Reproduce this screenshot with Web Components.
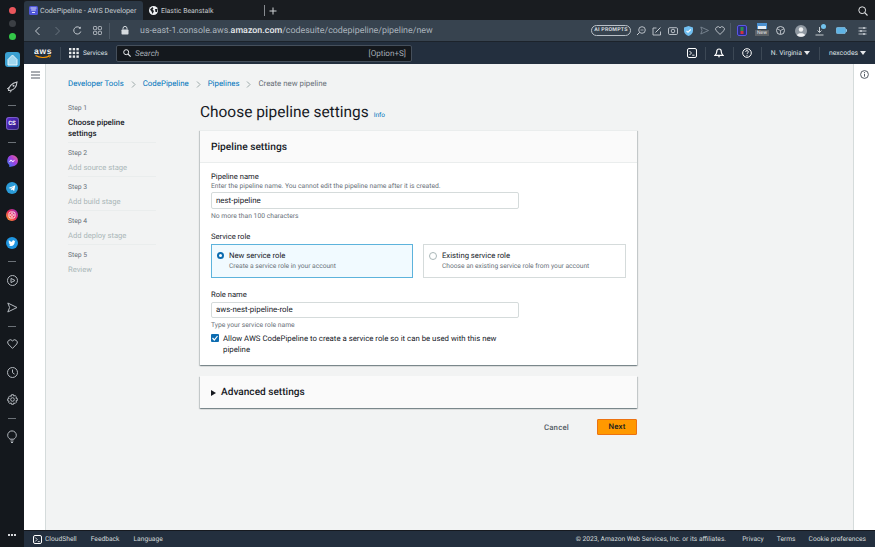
<!DOCTYPE html>
<html><head><meta charset="utf-8"><style>
html,body{margin:0;padding:0;height:100%;overflow:hidden}
body{width:875px;height:547px;font-family:Roboto,"Noto Sans",sans-serif;display:flex;background:#14181d;text-rendering:geometricPrecision}
</style></head><body>
<app-rail></app-rail>
<app-window></app-window>
<script>
function def(name,css,html){
 customElements.define(name,class extends HTMLElement{
  constructor(){super();this.attachShadow({mode:'open'}).innerHTML='<style>'+css+'</style>'+html;}
 });
}
const ic=(w,h,vb,inner,st='')=>`<svg width="${w}" height="${h}" viewBox="${vb}" style="display:block;flex:none;${st}">${inner}</svg>`;
const railStroke='fill="none" stroke="#b4b9bf" stroke-width="1"';
def('app-rail',`
:host{display:flex;flex-direction:column;align-items:center;width:24px;flex:none;background:#14181d;position:relative;box-sizing:border-box;padding-top:7px}
.d{width:7px;height:7px;border-radius:50%;margin-bottom:6px}
.sep{width:8px;height:1px;background:#6b7177;flex:none}
svg{display:block}
.home{width:15px;height:15px;border-radius:3px;background:#3aa0d2;display:flex;align-items:center;justify-content:center;margin-top:12px;flex:none}
.more{position:absolute;bottom:11px;left:8px;width:8px;height:2px;background:radial-gradient(circle at 1px 1px,#d5d7da 1px,transparent 1.1px) 0 0/3px 2px}
`,`
<div class="d" style="background:#e9565c"></div><div class="d" style="background:#3b3f44"></div><div class="d" style="background:#33c748;margin-bottom:0"></div>
<div class="home">${ic(11,12,'0 0 11 12','<path d="M1 11V5.500L5.500 1 10 5.500V11Z" fill="#9fd6ef" stroke="#e5f5fc" stroke-width="1"/>')}</div>
${ic(12,12,'0 0 12 12','<path d="M2.500 9.500c0-3.500 3-7.500 8.500-8.500-.5 5.500-4 8-7 8.500Z" fill="none" stroke="#c9ccd0" stroke-width="1.100"/><path d="M1 8l2-1.500M4 11.500l1.500-2" stroke="#c9ccd0"/><circle cx="7.500" cy="4.800" r="1" fill="#c9ccd0"/>','margin-top:14px')}
<div class="sep" style="margin-top:12px"></div>
<div style="margin-top:11px;width:13px;height:13px;flex:none;border-radius:3px;background:linear-gradient(135deg,#5b2bd0,#2c1a7a);box-shadow:inset 0 0 0 1px rgba(255,255,255,.25);color:#fff;font:700 6px/13px Roboto;text-align:center">CS</div>
<div class="sep" style="margin-top:12px"></div>
${ic(12,12,'0 0 12 12','<defs><linearGradient id="m" x1="0" y1="1" x2="1" y2="0"><stop offset="0" stop-color="#2f7df6"/><stop offset=".55" stop-color="#a33ee0"/><stop offset="1" stop-color="#f26a7e"/></linearGradient></defs><path d="M6 0a6 5.700 0 0 1 0 11.400L3.300 12v-2A5.700 5.700 0 0 1 6 0Z" fill="url(#m)"/><path d="M2.500 7.300 5 4.600l1.600 1.500 2.800-1.500L7 7.300 5.300 5.900Z" fill="#fff"/>','margin-top:12px')}
${ic(12,12,'0 0 12 12','<circle cx="6" cy="6" r="6" fill="#2a9bd8"/><path d="M2.500 6 9.300 3.200 8.200 9 6 7.400 5 8.400 4.800 6.900 8 4.400 4.300 6.600Z" fill="#fff"/>','margin-top:15px')}
${ic(12,12,'0 0 12 12','<defs><linearGradient id="g" x1="0" y1="1" x2="1" y2="0"><stop offset="0" stop-color="#fdb32b"/><stop offset=".5" stop-color="#ee2a5c"/><stop offset="1" stop-color="#8b2fc9"/></linearGradient></defs><circle cx="6" cy="6" r="6" fill="url(#g)"/><rect x="3" y="3" width="6" height="6" rx="1.500" fill="none" stroke="#fff" stroke-width=".9"/><circle cx="6" cy="6" r="1.400" fill="none" stroke="#fff" stroke-width=".8"/>','margin-top:15px')}
${ic(12,12,'0 0 12 12','<circle cx="6" cy="6" r="6" fill="#1f95e0"/><path d="M2.600 8.500c3.600 1.600 6.300-.5 6.200-4l.7-.7-.9.2c-.6-1.300-2.600-.9-2.500.8-1.300 0-2.400-.6-3.200-1.500-.4.900-.2 1.700.4 2.300l-.6-.1c0 .8.500 1.300 1.200 1.600h-.6c.2.500.7.800 1.200.9-.5.400-1.200.6-1.900.5Z" fill="#fff"/>','margin-top:16px')}
<div class="sep" style="margin-top:12px"></div>
${ic(11,11,'0 0 11 11','<circle cx="5.500" cy="5.500" r="5" '+railStroke+'/><path d="M4 3.400 8 5.500 4 7.600Z" '+railStroke+'/>','margin-top:13px')}
${ic(11,11,'0 0 11 11','<path d="M.8 1 10 5.500.8 10 2.600 5.500Z" '+railStroke+'/>','margin-top:16px')}
<div class="sep" style="margin-top:13px"></div>
${ic(11,10,'0 0 11 10','<path d="M5.500 9.400 1.200 5A2.600 2.600 0 0 1 5.500 1.900 2.600 2.600 0 0 1 9.800 5Z" '+railStroke+'/>','margin-top:12px')}
${ic(11,11,'0 0 11 11','<circle cx="5.500" cy="5.500" r="5" '+railStroke+'/><path d="M5.500 2.500v3.200l2 1.400" '+railStroke+'/>','margin-top:18px')}
${ic(11,11,'0 0 11 11','<circle cx="5.500" cy="5.500" r="1.800" '+railStroke+'/><path d="M4.500.7h2l.3 1.400 1.300-.6 1.400 1.400-.6 1.300 1.400.3v2l-1.400.3.6 1.300-1.400 1.400-1.300-.6-.3 1.400h-2l-.3-1.400-1.300.6L1.500 8.400l.6-1.300L.7 6.800v-2l1.400-.3-.6-1.300L2.900 1.800l1.300.6Z" '+railStroke+'/>','margin-top:16px')}
<div class="sep" style="margin-top:13px"></div>
${ic(10,13,'0 0 10 13','<path d="M3 9.200C1.600 8 .7 7 .7 5.200a4.300 4.300 0 0 1 8.600 0C9.300 7 8.400 8 7 9.200Z" '+railStroke+'/><path d="M3.500 11h3M4 12.500h2" '+railStroke+'/>','margin-top:11px')}
<div class="more"></div>
`);

def('browser-chrome',`
:host{display:block;flex:none;background:#191c20}
.tabs{height:19px;padding-top:1px;display:flex;align-items:stretch;background:#191c20;position:relative}
.tab{display:flex;align-items:center;font-size:7.200px;color:#d6dade;white-space:nowrap}
.tab.a{width:119px;background:#2b3744;border-radius:3px 3px 0 0;padding-left:5px;box-sizing:border-box;gap:2px}
.tab.a span{color:#c9ced3}
.tab.b{width:121px;padding-left:6px;box-sizing:border-box;gap:3px;color:#c8ccd0;font-size:6.900px}
.plus{display:flex;align-items:center;gap:4px;color:#d0d3d6}
.sr{position:absolute;right:7px;top:6px}
.addr{height:21px;background:#37434f;display:flex;align-items:center;position:relative;border-bottom:1px solid #1c232b}
.url{font-size:8.900px;color:#aab3bc;white-space:nowrap}
.url b{font-weight:500;color:#e6e9ec}
.vs{width:1px;height:16px;background:#4e5a66;flex:none}
.pill{border:1px solid #b9c0c7;border-radius:6px;height:11px;width:40px;box-sizing:border-box;line-height:9px;font-size:5.300px;font-weight:700;color:#d2d7dc;text-align:center;letter-spacing:.2px;white-space:nowrap}
`,`
<div class="tabs">
 <div class="tab a">${ic(9,9,'0 0 9 9','<rect width="9" height="9" rx="1.500" fill="#4f56d8"/><path d="M1.500 2h6M2.200 4h4.600M3 6.500h3" stroke="#dfe2fb" stroke-width="1.100"/>')}<span>CodePipeline - AWS Developer</span></div>
 <div class="tab b">${ic(9,9,'0 0 9 9','<circle cx="4.500" cy="4.500" r="4.500" fill="#f0f2f4"/><path d="M1 3.500 3.500 1l1 1.500-1 1 1.500 1.500L3.500 8 2.500 5.500ZM6 3h2.500L8 6 6.500 6Z" fill="#1b1e22"/>')}<span>Elastic Beanstalk</span></div>
 <div class="plus"><div style="width:1px;height:11px;background:#878b90;align-self:center"></div>${ic(8,8,'0 0 8 8','<path d="M4 .5v7M.5 4h7" stroke="#d0d3d6" stroke-width="1"/>')}</div>
 <div class="sr">${ic(10,10,'0 0 10 10','<circle cx="4.200" cy="4.200" r="3.400" fill="none" stroke="#e3e5e7" stroke-width="1"/><path d="M6.700 6.700 9.500 9.500" stroke="#e3e5e7" stroke-width="1.100"/>')}</div>
</div>
<div class="addr">
 ${ic(7,10,'0 0 7 10','<path d="M5.500 1 1.500 5l4 4" fill="none" stroke="#c6ccd2" stroke-width="1"/>','margin-left:10px')}
 ${ic(7,10,'0 0 7 10','<path d="M1.500 1l4 4-4 4" fill="none" stroke="#69747f" stroke-width="1"/>','margin-left:13px')}
 ${ic(9,9,'0 0 9 9','<path d="M7.800 5.500A3.600 3.600 0 1 1 7 2" fill="none" stroke="#c6ccd2" stroke-width="1"/><path d="M7.800.6v2.200H5.600Z" fill="#c6ccd2"/>','margin-left:12px')}
 ${ic(9,9,'0 0 9 9','<g fill="none" stroke="#c6ccd2" stroke-width=".8"><rect x=".5" y=".5" width="3.200" height="3.200" rx=".7"/><rect x="5.300" y=".5" width="3.200" height="3.200" rx=".7"/><rect x=".5" y="5.300" width="3.200" height="3.200" rx=".7"/><rect x="5.300" y="5.300" width="3.200" height="3.200" rx=".7"/></g>','margin-left:11px')}
 <div class="vs" style="margin-left:7px"></div>
 ${ic(8,9,'0 0 8 9','<rect x=".5" y="3.500" width="7" height="5" rx=".8" fill="#d5dade"/><path d="M2 3.500V2.400a2 2 0 0 1 4 0v1.100" fill="none" stroke="#d5dade"/>','margin-left:11px')}
 <span class="url" style="margin-left:11px">us-east-1.console.aws.<b>amazon.com</b>/codesuite/codepipeline/pipeline/new</span>
 <div style="flex:1"></div>
 <div class="pill">AI PROMPTS</div>
 ${ic(10,10,'0 0 10 10','<circle cx="6" cy="4" r="3.300" fill="none" stroke="#c6ccd2" stroke-width=".9"/><path d="M3.500 6.500 1 9" stroke="#c6ccd2"/><path d="M4.500 4h3" stroke="#c6ccd2" stroke-width=".7"/>','margin-left:5px')}
 ${ic(10,10,'0 0 10 10','<path d="M8.500 5.500V9H1V2h3.500" fill="none" stroke="#c6ccd2" stroke-width=".9"/><path d="M3.500 6.500 8.500 1.500" stroke="#c6ccd2"/>','margin-left:6px')}
 ${ic(10,9,'0 0 10 9','<rect x=".5" y="1.700" width="9" height="6.800" rx="1.200" fill="none" stroke="#c6ccd2" stroke-width=".9"/><circle cx="5" cy="5" r="1.800" fill="none" stroke="#c6ccd2" stroke-width=".9"/>','margin-left:6px')}
 ${ic(9,10,'0 0 9 10','<path d="M4.500 0 9 1.500v3.300C9 7.500 6.800 9.200 4.500 10 2.200 9.200 0 7.500 0 4.800V1.500Z" fill="#71bff0"/><path d="M2.500 4.800 4 6.300 6.700 3.500" fill="none" stroke="#fff" stroke-width="1.100"/>','margin-left:6px')}
 ${ic(9,9,'0 0 9 9','<path d="M.8 1 8.500 4.500.8 8 2 4.500Z" fill="none" stroke="#7d8894" stroke-width=".9"/>','margin-left:7px')}
 ${ic(10,9,'0 0 10 9','<path d="M5 8.400 1 4.500A2.400 2.400 0 0 1 5 1.800 2.400 2.400 0 0 1 9 4.500Z" fill="none" stroke="#c6ccd2" stroke-width=".9"/>','margin-left:6px')}
 <div class="vs" style="margin-left:5px;height:15px"></div>
 ${ic(10,11,'0 0 10 11','<rect x=".5" y=".5" width="9" height="10" rx="1.500" fill="#2a2f7e" stroke="#5b57e6"/><rect x="3.500" y="2" width="3" height="4" fill="#2c8f4c"/><rect x="3.500" y="6" width="3" height="3" fill="#d3343b"/>','margin-left:6px')}
 <div style="margin-left:9px;width:12px;height:15px;position:relative;flex:none">
   ${ic(10,6,'0 0 10 6','<rect width="10" height="6" fill="#4a90d0"/><rect x="1" y="3" width="8" height="3" fill="#e6eef5"/>','position:absolute;left:1px;top:0')}
   <span style="position:absolute;left:-1px;top:7px;width:14px;height:6px;background:#5c6166;color:#e5e7e9;font-size:5px;line-height:6px;text-align:center">New</span>
 </div>
 ${ic(9,9,'0 0 9 9','<circle cx="4.500" cy="4.500" r="4" fill="none" stroke="#c6ccd2"/><path d="M4.500 4.500V8M4.500 4.500 1.200 2.800M4.500 4.500 7.800 2.800" stroke="#c6ccd2" stroke-width=".8"/>','margin-left:8px')}
 ${ic(12,12,'0 0 12 12','<circle cx="6" cy="6" r="6" fill="#8f98a1"/><circle cx="6" cy="4.500" r="2.200" fill="#eef0f2"/><path d="M2 10.200c.6-2.600 7.400-2.600 8 0a6 6 0 0 1-8 0Z" fill="#eef0f2"/>','margin-left:10px')}
 <div style="margin-left:8px;width:11px;height:11px;position:relative;flex:none">
   ${ic(9,9,'0 0 9 9','<path d="M4.500 0v5M2.500 3.500l2 2 2-2M.5 8h8" fill="none" stroke="#d5dade" stroke-width=".9"/>','position:absolute;left:0;top:2px')}
   <span style="position:absolute;left:6px;top:-1px;width:5px;height:5px;border-radius:50%;background:#72c3ee"></span>
 </div>
 ${ic(11,7,'0 0 11 7','<rect x=".4" y=".4" width="9" height="6.200" rx="1.200" fill="#5fb4e6" stroke="#8ccbef" stroke-width=".7"/><rect x="10" y="2.200" width="1" height="2.600" fill="#8ccbef"/>','margin-left:10px')}
 ${ic(9,8,'0 0 9 8','<path d="M.5 1h8M.5 4h8M.5 7h8" stroke="#c6ccd2" stroke-width=".9"/><circle cx="6" cy="1" r="1" fill="#c6ccd2"/><circle cx="3" cy="4" r="1" fill="#c6ccd2"/><circle cx="6" cy="7" r="1" fill="#c6ccd2"/>','margin:0 8px 0 11px')}
</div>`);

def('aws-nav',`
:host{display:flex;align-items:center;height:22px;flex:none;background:#232f3e;color:#dfe3e6;font-size:6.800px;white-space:nowrap}
.sp{width:1px;height:13px;background:#3c4855;flex:none}
.svc{display:block;width:24px;margin-left:4px;font-size:6.500px}
.search{width:296px;height:17px;box-sizing:border-box;background:#14181d;border:1px solid #454f5b;border-radius:2px;display:flex;align-items:center;margin-left:9px;padding:0 5px 0 6px;color:#a4acb4;font-size:8.100px;flex:none}
.search i{margin-left:4px;flex:1;font-style:italic}
.r{display:flex;align-items:center;margin-left:auto}
.car{width:0;height:0;border:3px solid transparent;border-top:4px solid #e6e8ea;border-bottom:0;margin-left:2px}
`,`
<svg width="18" height="12" viewBox="0 0 18 12" style="margin-left:10px;flex:none"><text x="0" y="7" font-family="'Liberation Sans'" font-size="8.500" font-weight="700" fill="#f2f3f3" textLength="17.500">aws</text><path d="M1.500 8.500c4 2.500 10 2.500 14 .5" fill="none" stroke="#ff9900" stroke-width="1.100"/><path d="M14 8.200l2.600.2-1 2.200" fill="none" stroke="#ff9900" stroke-width=".8"/></svg>
<div class="sp" style="margin-left:8px"></div>
${ic(10,10,'0 0 10 10','<g fill="#e8eaec"><rect width="2.400" height="2.400"/><rect x="3.700" width="2.400" height="2.400"/><rect x="7.400" width="2.400" height="2.400"/><rect y="3.700" width="2.400" height="2.400"/><rect x="3.700" y="3.700" width="2.400" height="2.400"/><rect x="7.400" y="3.700" width="2.400" height="2.400"/><rect y="7.400" width="2.400" height="2.400"/><rect x="3.700" y="7.400" width="2.400" height="2.400"/><rect x="7.400" y="7.400" width="2.400" height="2.400"/></g>','margin-left:8px')}
<span class="svc">Services</span>
<div class="search">${ic(8,8,'0 0 8 8','<circle cx="3.200" cy="3.200" r="2.500" fill="none" stroke="#e6e8ea" stroke-width="1"/><path d="M5 5l2.600 2.600" stroke="#e6e8ea" stroke-width="1.100"/>')}<i>Search</i><span>[Option+S]</span></div>
<div class="r">
 ${ic(10,10,'0 0 10 10','<rect x=".5" y=".5" width="9" height="9" rx="1.500" fill="#232f3e" stroke="#fff"/><path d="M2.500 3 4.500 5 2.500 7M5.200 7.200h2.300" fill="none" stroke="#fff" stroke-width=".9"/>')}
 <div class="sp" style="margin-left:8px"></div>
 ${ic(10,10,'0 0 10 10','<path d="M5 1c-1.800 0-2.300 1.500-2.300 3 0 1.500-.7 2.300-1.700 3.300h8C8 6.300 7.300 5.500 7.300 4 7.300 2.500 6.800 1 5 1Z" fill="none" stroke="#fff" stroke-width="1.200"/><path d="M3.800 8.200h2.400L5 9.800Z" fill="#fff"/>','margin-left:8px')}
 <div class="sp" style="margin-left:9px"></div>
 ${ic(10,10,'0 0 10 10','<circle cx="5" cy="5" r="4.300" fill="none" stroke="#fff" stroke-width="1"/><path d="M3.600 3.900c0-1.800 2.800-1.800 2.800 0 0 1-1.400 1.100-1.400 2" fill="none" stroke="#fff" stroke-width=".9"/><circle cx="5" cy="7.300" r=".6" fill="#fff"/>','margin-left:8px')}
 <div class="sp" style="margin-left:9px"></div>
 <span style="margin-left:9px">N. Virginia</span><div class="car"></div>
 <div class="sp" style="margin-left:9px"></div>
 <span style="margin-left:9px">nexcodes</span><div class="car" style="margin-right:9px"></div>
</div>`);

def('aws-footer',`
:host{display:flex;align-items:center;height:17px;flex:none;background:#232f3e;color:#d5dbdb;font-size:6.700px;white-space:nowrap;border-top:1px solid #16191f;box-sizing:border-box}
.r{margin-left:auto;display:flex}
`,`
${ic(9,9,'0 0 9 9','<rect x=".5" y=".5" width="8" height="8" rx="1.500" fill="none" stroke="#fff"/><path d="M2.200 2.500 4.200 4.500 2.200 6.500M4.800 6.600h2" fill="none" stroke="#fff" stroke-width=".8"/>','margin-left:9px')}
<span style="margin-left:3px">CloudShell</span><span style="margin-left:14px">Feedback</span><span style="margin-left:14px">Language</span>
<span class="r"><span>© 2023, Amazon Web Services, Inc. or its affiliates.</span><span style="margin-left:16px">Privacy</span><span style="margin-left:13px">Terms</span><span style="margin:0 9px 0 13px">Cookie preferences</span></span>`);

def('wizard-steps',`
:host{display:block;width:132px;flex:none;font-size:6.800px;line-height:11px;color:#687078}
.st{margin-bottom:3px;height:11px}
.t{color:#aab7b8;padding-bottom:4px;margin-bottom:5px;position:relative;font-size:7.600px}
.t::after{content:"";position:absolute;left:0;bottom:0;width:88px;border-bottom:1px solid #eaeded}
.t.on{color:#16191f;font-weight:500;width:80px;font-size:7.900px}
.t:last-child::after{display:none}
`,`
<div class="st">Step 1</div><div class="t on">Choose pipeline settings</div>
<div class="st">Step 2</div><div class="t">Add source stage</div>
<div class="st">Step 3</div><div class="t">Add build stage</div>
<div class="st">Step 4</div><div class="t">Add deploy stage</div>
<div class="st">Step 5</div><div class="t">Review</div>`);

def('form-field',`
:host{display:block;color:#16191f}
.l{font-size:7.600px;line-height:11px}
.d{font-size:6.750px;line-height:9px;color:#687078}
.i{width:308px;height:17px;box-sizing:border-box;border:1px solid #d5dbdb;border-radius:2px;background:#fff;font-size:7.900px;line-height:15px;padding:0 4px;margin-top:1px}
.h{font-size:6.750px;line-height:9px;color:#687078;margin-top:3px}
:host([nodesc]) .i{margin-top:2px;height:16px;line-height:14px}
`,`<div class="l"><slot name="label"></slot></div><div class="d"><slot name="desc"></slot></div><div class="i"><slot name="value"></slot></div><div class="h"><slot name="hint"></slot></div>`);

def('role-tile',`
:host{display:flex;box-sizing:border-box;height:34px;border:1px solid #d5dbdb;background:#fff;padding:5px;color:#16191f;gap:5px}
:host([on]){border-color:#5db3dc;background:#f1faff}
.o{width:6px;height:6px;border-radius:50%;border:1px solid #aab7b8;margin-top:2px;flex:none;background:#fff}
:host([on]) .o{border:2.500px solid #0d6cb0;width:3px;height:3px}
.a{font-size:7.700px;line-height:11px}
.b{font-size:6.650px;line-height:10px;color:#687078}
`,`<div class="o"></div><div><div class="a"><slot name="title"></slot></div><div class="b"><slot name="sub"></slot></div></div>`);

def('aws-card',`
:host{display:block;background:#fff;box-shadow:0 1px 1px 0 rgba(0,28,36,.3),1px 1px 1px 0 rgba(0,28,36,.15),-1px 1px 1px 0 rgba(0,28,36,.15);border-top:1px solid #eaeded}
.h{height:31px;background:#fafafa;border-bottom:1px solid #eaeded;font-size:10.200px;font-weight:500;color:#16191f;line-height:33px;padding-left:11px}
.b{padding:8px 11px 0}
`,`<div class="h"><slot name="head"></slot></div><div class="b"><slot></slot></div>`);

def('app-window',`
:host{display:flex;flex-direction:column;flex:1;min-width:0;height:547px;background:#f2f3f3}
.m{flex:1;display:flex;min-height:0}
.nav{width:22px;background:#fff;border-right:1px solid #d5dbdb;box-sizing:border-box;flex:none;padding:7px 0 0 7px}
.c{flex:1;padding:14px 0 0 22px;min-width:0}
.bc{display:flex;align-items:center;font-size:7.850px;line-height:12px;color:#687078;white-space:nowrap}
.bc a{color:#0073bb}
.bc svg{margin:0 7px}
.row{display:flex;margin-top:13px}
.main{width:437px;flex:none}
h1{margin:-3px 0 0;height:24px;font-weight:400;font-size:15.450px;line-height:24px;color:#16191f;display:flex;align-items:baseline}
h1 a{font-size:6.500px;line-height:10px;color:#0073bb;margin-left:5px}
.side{width:22px;background:#fff;border-left:1px solid #d5dbdb;box-sizing:border-box;flex:none;display:flex;justify-content:center;padding-top:6px}
.tiles{display:flex;gap:10px;margin-top:2px}
.lab{font-size:7.600px;line-height:11px;color:#16191f}
.chk{display:flex;margin-top:3px;font-size:7.800px;line-height:11px;color:#16191f;gap:4px;width:290px}
.box{width:8px;height:8px;background:#0d6cb0;border-radius:1px;flex:none;margin-top:1px}
.adv{display:flex;align-items:center;box-sizing:border-box;height:32px;padding-top:1px;background:#fafafa;font-size:10.100px;font-weight:500;color:#16191f;padding-left:11px;gap:5px;margin-top:11px;box-shadow:0 1px 1px 0 rgba(0,28,36,.3),1px 1px 1px 0 rgba(0,28,36,.15),-1px 1px 1px 0 rgba(0,28,36,.15)}
.act{display:flex;justify-content:flex-end;align-items:center;margin-top:11px;font-size:7.800px;font-weight:500}
.act span{color:#545b64;letter-spacing:.2px}
.next{width:40px;height:16px;background:#ff9900;border:1px solid #ec7211;box-sizing:border-box;border-radius:1px;color:#16191f;text-align:center;line-height:14px;margin-left:28px;letter-spacing:.2px}
`,`
<browser-chrome></browser-chrome>
<aws-nav></aws-nav>
<div class="m">
 <div class="nav">${ic(9,8,'0 0 9 8','<path d="M0 1h9M0 4h9M0 7h9" stroke="#545b64" stroke-width="1"/>')}</div>
 <div class="c">
  <div class="bc"><a>Developer Tools</a>${ic(5,7,'0 0 5 7','<path d="M1 .5 4 3.500 1 6.500" fill="none" stroke="#879596" stroke-width=".8"/>')}<a>CodePipeline</a>${ic(5,7,'0 0 5 7','<path d="M1 .5 4 3.500 1 6.500" fill="none" stroke="#879596" stroke-width=".8"/>')}<a>Pipelines</a>${ic(5,7,'0 0 5 7','<path d="M1 .5 4 3.500 1 6.500" fill="none" stroke="#879596" stroke-width=".8"/>')}<span>Create new pipeline</span></div>
  <div class="row">
   <wizard-steps></wizard-steps>
   <div class="main">
    <h1>Choose pipeline settings<a>Info</a></h1>
    <aws-card style="margin-top:6px">
     <span slot="head">Pipeline settings</span>
     <form-field><span slot="label">Pipeline name</span><span slot="desc">Enter the pipeline name. You cannot edit the pipeline name after it is created.</span><span slot="value">nest-pipeline</span><span slot="hint">No more than 100 characters</span></form-field>
     <div class="lab" style="margin-top:10px">Service role</div>
     <div class="tiles">
      <role-tile on style="width:202px"><span slot="title">New service role</span><span slot="sub">Create a service role in your account</span></role-tile>
      <role-tile style="width:203px"><span slot="title">Existing service role</span><span slot="sub">Choose an existing service role from your account</span></role-tile>
     </div>
     <form-field nodesc style="margin-top:11px"><span slot="label">Role name</span><span slot="value">aws-nest-pipeline-role</span><span slot="hint">Type your service role name</span></form-field>
     <div class="chk"><div class="box">${ic(8,8,'0 0 8 8','<path d="M1.500 4 3.300 6 6.500 2" fill="none" stroke="#fff" stroke-width="1.200"/>')}</div><div>Allow AWS CodePipeline to create a service role so it can be used with this new pipeline</div></div>
     <div style="height:10px"></div>
    </aws-card>
    <div class="adv">${ic(5,6,'0 0 5 6','<path d="M0 0 5 3 0 6Z" fill="#16191f"/>')}<span>Advanced settings</span></div>
    <div class="act"><span>Cancel</span><div class="next">Next</div></div>
   </div>
  </div>
 </div>
 <div class="side">${ic(9,9,'0 0 9 9','<circle cx="4.500" cy="4.500" r="3.900" fill="none" stroke="#545b64" stroke-width="1"/><path d="M4.500 4v2.600" stroke="#545b64" stroke-width="1"/><circle cx="4.500" cy="2.700" r=".6" fill="#545b64"/>')}</div>
</div>
<aws-footer></aws-footer>`);
</script>
</body></html>
